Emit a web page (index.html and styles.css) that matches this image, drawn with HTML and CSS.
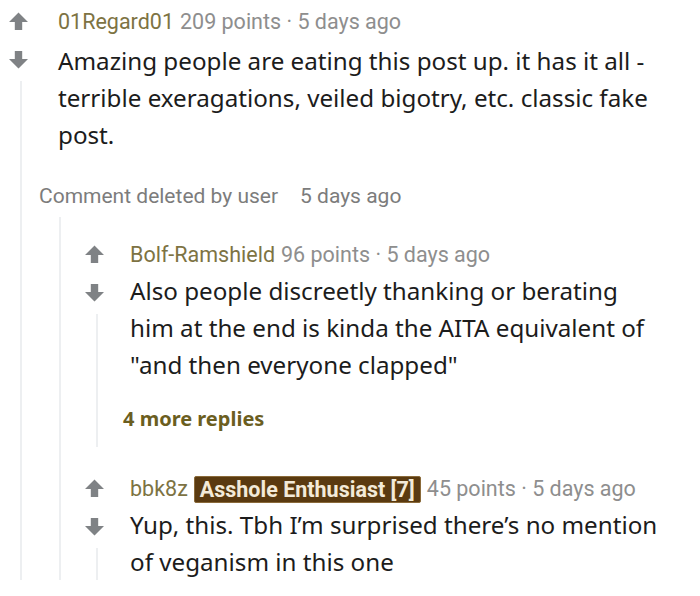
FILE: index.html
```html
<!DOCTYPE html>
<html>
<head>
<meta charset="utf-8">
<link rel="stylesheet" href="styles.css">
</head>
<body>
<div class="comment top">
  <div class="rail">
    <div class="votes">
      <svg class="arrow" viewBox="0 0 18 18"><path d="M9 0.5 L18 9.5 H12.5 V17 H5.5 V9.5 H0 Z"/></svg>
      <svg class="arrow down" viewBox="0 0 18 18"><path d="M9 17.5 L18 8.5 H12.5 V1 H5.5 V8.5 H0 Z"/></svg>
    </div>
    <div class="line"></div>
  </div>
  <div class="main">
    <div class="head"><span class="user">01Regard01</span> <span class="meta">209 points · 5 days ago</span></div>
    <div class="body">Amazing people are eating this post up. it has it all - terrible exeragations, veiled bigotry, etc. classic fake post.</div>
    <div class="deleted">
      <div class="deleted-head"><span>Comment deleted by user</span><span>5 days ago</span></div>
      <div class="children">
        <div class="comment nested">
          <div class="rail">
            <div class="votes">
              <svg class="arrow" viewBox="0 0 18 18"><path d="M9 0.5 L18 9.5 H12.5 V17 H5.5 V9.5 H0 Z"/></svg>
              <svg class="arrow down" viewBox="0 0 18 18"><path d="M9 17.5 L18 8.5 H12.5 V1 H5.5 V8.5 H0 Z"/></svg>
            </div>
            <div class="line"></div>
          </div>
          <div class="main">
            <div class="head"><span class="user">Bolf-Ramshield</span> <span class="meta">96 points · 5 days ago</span></div>
            <div class="body">Also people discreetly thanking or berating him at the end is kinda the AITA equivalent of "and then everyone clapped"</div>
            <div class="more">4 more replies</div>
          </div>
        </div>
        <div class="comment nested last">
          <div class="rail">
            <div class="votes">
              <svg class="arrow" viewBox="0 0 18 18"><path d="M9 0.5 L18 9.5 H12.5 V17 H5.5 V9.5 H0 Z"/></svg>
              <svg class="arrow down" viewBox="0 0 18 18"><path d="M9 17.5 L18 8.5 H12.5 V1 H5.5 V8.5 H0 Z"/></svg>
            </div>
            <div class="line"></div>
          </div>
          <div class="main">
            <div class="head"><span class="user">bbk8z</span> <span class="flair">Asshole Enthusiast [7]</span> <span class="meta">45 points · 5 days ago</span></div>
            <div class="body">Yup, this. Tbh I’m surprised there’s no mention of veganism in this one</div>
          </div>
        </div>
      </div>
    </div>
  </div>
</div>
</body>
</html>
```

FILE: styles.css
```css
html, body {
  margin: 0;
  padding: 0;
  background: #ffffff;
  height: 596px;
  overflow: hidden;
}
body {
  padding: 6px 0 0 8px;
  font-family: "Noto Sans", "Open Sans", sans-serif;
  color: #1c1c1c;
}
.comment {
  display: grid;
}
.comment.top {
  grid-template-columns: 31px 1fr;
}
.comment.nested {
  grid-template-columns: 39px 1fr;
}
.rail {
  display: flex;
  flex-direction: column;
}
.votes {
  display: flex;
  flex-direction: column;
  padding: 6px 0 0 1px;
  gap: 19px;
}
.arrow {
  width: 19px;
  height: 19px;
  fill: #7f8285;
  display: block;
}
.line {
  flex: 1;
  width: 2px;
  background: #edeff1;
  margin: 12px 0 0 12px;
}
.top > .main > .head,
.top > .main > .body {
  padding-left: 19px;
}
.nested > .main > .head,
.nested > .main > .body {
  padding-left: 7px;
}
.head {
  font-family: Roboto, "Liberation Sans", sans-serif;
  font-size: 21.5px;
  line-height: 28px;
  height: 32px;
  display: flex;
  align-items: center;
  gap: 6px;
  white-space: nowrap;
}
.user {
  color: #7d7343;
}
.meta {
  color: #8e8e8e;
}
.flair {
  background: #5a3a10;
  color: #f3ead8;
  font-weight: bold;
  border: 1px solid #8a6a3a;
  border-radius: 2px;
  padding: 0 5px;
  line-height: 25px;
}
.body {
  font-size: 24.2px;
  line-height: 37px;
  margin-top: 4px;
  padding-right: 35px;
}
.nested > .main > .body {
  margin-top: 1px;
}
.deleted {
  margin-top: 31px;
}
.deleted-head {
  font-family: Roboto, "Liberation Sans", sans-serif;
  font-size: 21px;
  color: #7c7c7c;
  display: flex;
  gap: 22px;
  height: 24px;
  align-items: center;
}
.children {
  margin: 9px 0 0 20px;
  border-left: 2px solid #edeff1;
  padding: 22px 0 0 23px;
}
.more {
  font-size: 20px;
  line-height: 28px;
  font-weight: bold;
  color: #6b5e1f;
  margin-top: 22px;
  padding-bottom: 14px;
}
.comment.last {
  margin-top: 26px;
}
```
